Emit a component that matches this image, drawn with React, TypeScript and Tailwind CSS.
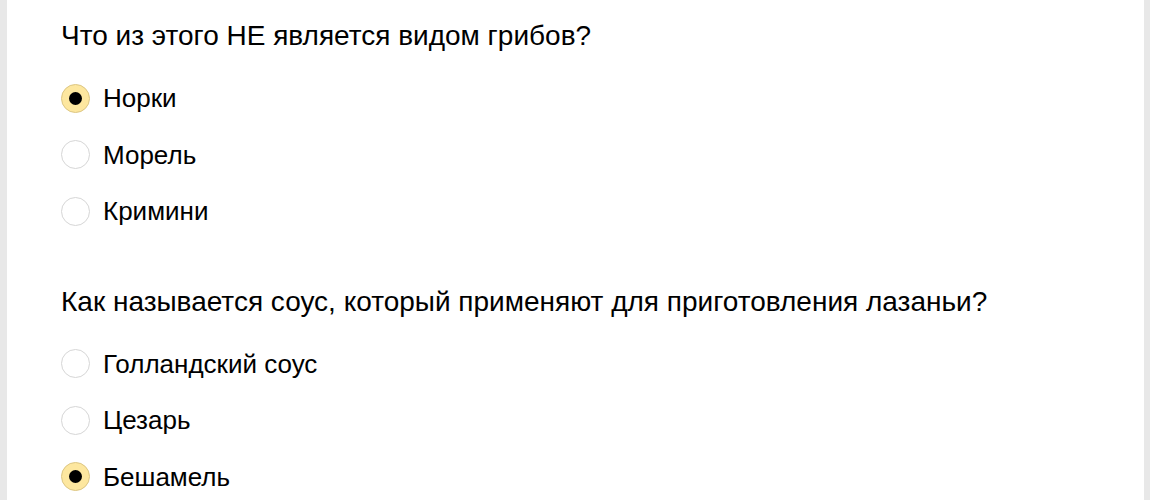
import React from "react";

type Q = { q: string; options: string[]; selected: number };

const data: Q[] = [
  { q: "Что из этого НЕ является видом грибов?", options: ["Норки", "Морель", "Кримини"], selected: 0 },
  {
    q: "Как называется соус, который применяют для приготовления лазаньи?",
    options: ["Голландский соус", "Цезарь", "Бешамель"],
    selected: 2,
  },
];

function Radio({ checked }: { checked: boolean }) {
  return checked ? (
    <span className="flex h-[29px] w-[29px] shrink-0 items-center justify-center rounded-full border border-[#dcc683] bg-[#fde79f]">
      <span className="h-[13px] w-[13px] rounded-full bg-black" />
    </span>
  ) : (
    <span className="h-[29px] w-[29px] shrink-0 rounded-full border border-[#d6d6d6] bg-white" />
  );
}

export default function App() {
  return (
    <div
      className="h-[500px] w-full overflow-hidden bg-[#e8e8e8] pl-[7px] pr-[6px]"
      style={{ fontFamily: '"Liberation Sans", Arial, sans-serif' }}
    >
      <div className="h-full bg-white pl-[54px] pt-[20px] text-black">
        {data.map((item, qi) => (
          <div key={qi} className={qi > 0 ? "mt-[46.5px]" : ""}>
            <div className="text-[28px] leading-[32px]">{item.q}</div>
            <div className="mt-[17.75px] flex flex-col">
              {item.options.map((o, oi) => (
                <label key={oi} className="flex h-[56.5px] items-center gap-[13px]">
                  <Radio checked={oi === item.selected} />
                  <span className="text-[26px] leading-[30px]">{o}</span>
                </label>
              ))}
            </div>
          </div>
        ))}
      </div>
    </div>
  );
}
